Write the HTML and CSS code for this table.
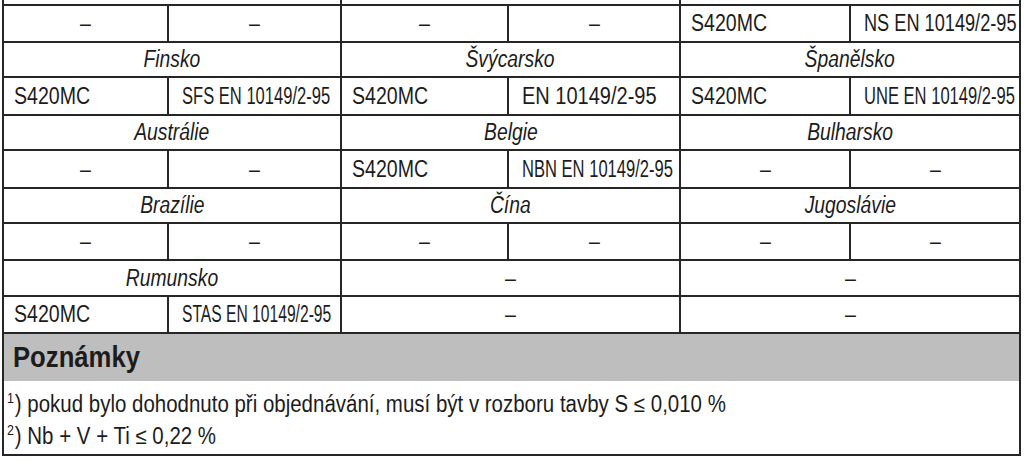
FILE: index.html
```html
<!DOCTYPE html>
<html lang="cs">
<head>
<meta charset="utf-8">
<title>Ekvivalenty oceli S420MC</title>
<link rel="stylesheet" href="styles.css">
</head>
<body>
<div class="sheet">
  <div class="row top">
    <div class="c s2"></div><div class="c s2"></div><div class="c s2"></div>
  </div>
  <div class="row data">
    <div class="c mid"><span class="t">–</span></div><div class="c mid"><span class="t">–</span></div>
    <div class="c mid"><span class="t">–</span></div><div class="c mid"><span class="t">–</span></div>
    <div class="c grade"><span class="t">S420MC</span></div><div class="c std"><span class="t x79">NS EN 10149/2-95</span></div>
  </div>
  <div class="row name">
    <div class="c s2 country"><span class="t">Finsko</span></div>
    <div class="c s2 country"><span class="t">Švýcarsko</span></div>
    <div class="c s2 country"><span class="t">Španělsko</span></div>
  </div>
  <div class="row data tall">
    <div class="c grade"><span class="t">S420MC</span></div><div class="c std"><span class="t x72">SFS EN 10149/2-95</span></div>
    <div class="c grade"><span class="t">S420MC</span></div><div class="c std"><span class="t x87">EN 10149/2-95</span></div>
    <div class="c grade"><span class="t">S420MC</span></div><div class="c std"><span class="t x72">UNE EN 10149/2-95</span></div>
  </div>
  <div class="row name">
    <div class="c s2 country"><span class="t">Austrálie</span></div>
    <div class="c s2 country"><span class="t">Belgie</span></div>
    <div class="c s2 country"><span class="t">Bulharsko</span></div>
  </div>
  <div class="row data tall">
    <div class="c mid"><span class="t">–</span></div><div class="c mid"><span class="t">–</span></div>
    <div class="c grade"><span class="t">S420MC</span></div><div class="c std"><span class="t x72">NBN EN 10149/2-95</span></div>
    <div class="c mid"><span class="t">–</span></div><div class="c mid"><span class="t">–</span></div>
  </div>
  <div class="row name">
    <div class="c s2 country"><span class="t">Brazílie</span></div>
    <div class="c s2 country"><span class="t">Čína</span></div>
    <div class="c s2 country"><span class="t">Jugoslávie</span></div>
  </div>
  <div class="row data">
    <div class="c mid"><span class="t">–</span></div><div class="c mid"><span class="t">–</span></div>
    <div class="c mid"><span class="t">–</span></div><div class="c mid"><span class="t">–</span></div>
    <div class="c mid"><span class="t">–</span></div><div class="c mid"><span class="t">–</span></div>
  </div>
  <div class="row name tall">
    <div class="c s2 country"><span class="t">Rumunsko</span></div>
    <div class="c s2 mid"><span class="t">–</span></div>
    <div class="c s2 mid"><span class="t">–</span></div>
  </div>
  <div class="row data">
    <div class="c grade"><span class="t">S420MC</span></div><div class="c std"><span class="t x68">STAS EN 10149/2-95</span></div>
    <div class="c s2 mid"><span class="t">–</span></div>
    <div class="c s2 mid"><span class="t">–</span></div>
  </div>
  <div class="notes-head"><span class="t">Poznámky</span></div>
  <div class="notes">
    <p class="note"><span class="t"><sup>1</sup>) pokud bylo dohodnuto při objednávání, musí být v rozboru tavby S ≤ 0,010 %</span></p>
    <p class="note"><span class="t"><sup>2</sup>) Nb + V + Ti ≤ 0,22 %</span></p>
  </div>
</div>
</body>
</html>
```

FILE: styles.css
```css
html, body {
  margin: 0;
  padding: 0;
  background: #ffffff;
}

body {
  font-family: "Liberation Sans", Arial, sans-serif;
  color: #1c1c1c;
  font-size: 23px;
  line-height: 1;
}

.sheet {
  margin-left: 2px;
  width: 1015px;
  border-left: 2px solid #262626;
  border-right: 2px solid #262626;
  border-bottom: 2px solid #262626;
}

.row {
  display: grid;
  grid-template-columns: 165px 173px 167px 172px 170px 168px;
  box-sizing: border-box;
  border-bottom: 2px solid #262626;
}

.row.top { height: 6px; }
.row.data { height: 37px; }
.row.data.tall { height: 38px; }
.row.name { height: 35px; }
.row.name.tall { height: 36px; }

.c {
  display: flex;
  align-items: center;
  border-right: 2px solid #262626;
  white-space: nowrap;
  overflow: hidden;
}

.c:last-child { border-right: none; }

.s2 { grid-column: span 2; }

.t {
  display: inline-block;
  transform-origin: left center;
  transform: scaleX(0.85);
}

.mid, .country { justify-content: center; }

.mid .t, .country .t { transform-origin: center center; }

.country { font-style: italic; }

.country .t { transform: scaleX(0.84); }

.grade { padding-left: 10px; }

.std { padding-left: 13px; }

.std .x68 { transform: scaleX(0.68); }
.std .x72 { transform: scaleX(0.72); }
.std .x79 { transform: scaleX(0.79); }
.std .x87 { transform: scaleX(0.87); }

.notes-head {
  height: 47px;
  background: #bebebe;
  display: flex;
  align-items: center;
  padding-left: 9px;
  font-weight: bold;
  font-size: 29px;
}

.notes-head .t { transform: scaleX(0.885); }

.notes {
  height: 73px;
  padding: 7px 0 0 3px;
  box-sizing: border-box;
}

.note {
  margin: 0;
  height: 32px;
  display: flex;
  align-items: center;
  white-space: nowrap;
}

.note .t { transform: scaleX(0.89); }

.note sup {
  font-size: 14px;
  vertical-align: 9px;
  line-height: 0;
  padding-right: 1px;
}
```
